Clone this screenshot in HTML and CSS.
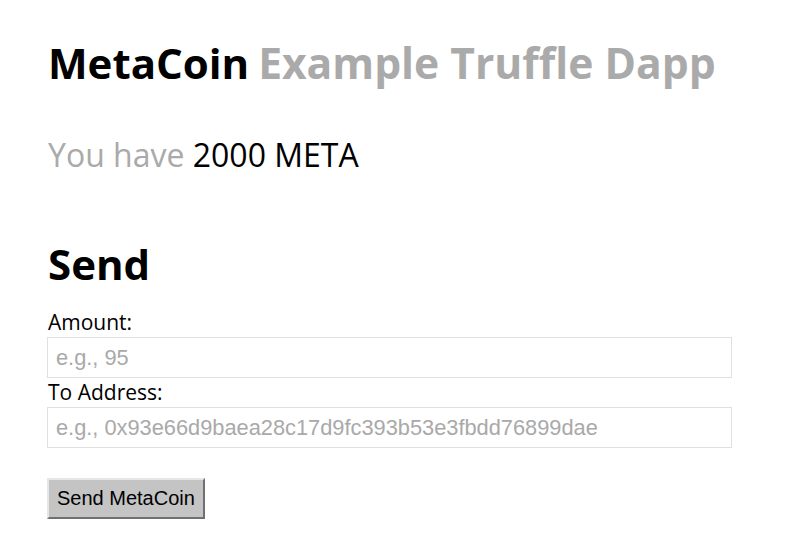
FILE: index.html
```html
<!DOCTYPE html>
<html>
<head>
<meta charset="utf-8">
<link rel="stylesheet" href="styles.css">
</head>
<body>
<main class="page">
  <h1 class="title">MetaCoin <span class="muted">Example Truffle Dapp</span></h1>
  <h2 class="balance"><span class="muted">You have</span> <span class="amount">2000</span> META</h2>
  <h1 class="send-title">Send</h1>
  <form class="send-form">
    <label class="field-label" for="amount">Amount:</label>
    <input class="field" type="text" id="amount" placeholder="e.g., 95">
    <label class="field-label" for="receiver">To Address:</label>
    <input class="field" type="text" id="receiver" placeholder="e.g., 0x93e66d9baea28c17d9fc393b53e3fbdd76899dae">
    <button class="send-button" type="button">Send MetaCoin</button>
  </form>
</main>
</body>
</html>
```
FILE: styles.css
```css
html, body {
  margin: 0;
  padding: 0;
  background: #fff;
}
body {
  font-family: "Open Sans", "Liberation Sans", sans-serif;
  color: #000;
}
.page {
  padding: 34px 48px 0;
  display: flex;
  flex-direction: column;
}
.muted {
  color: #aaa;
}
.title {
  font-size: 42px;
  font-weight: 700;
  margin: 0;
  line-height: 57px;
  word-spacing: -2px;
}
.title .muted {
  font-size: 42.6px;
  word-spacing: normal;
}
.balance {
  font-size: 32px;
  font-weight: 400;
  margin: 42px 0 0;
  line-height: 44px;
}
.send-title {
  font-size: 42px;
  font-weight: 700;
  margin: 58px 0 0;
  line-height: 57px;
}
.send-form {
  display: flex;
  flex-direction: column;
  align-items: flex-start;
  margin-top: 16px;
}
.field-label {
  font-size: 21px;
  line-height: 29px;
}
.field {
  box-sizing: border-box;
  width: 685px;
  height: 41px;
  margin: 0 0 0 -1px;
  border: 1px solid #e0e0e0;
  padding: 0 8px;
  font-family: "Liberation Sans", Arial, sans-serif;
  font-size: 21.8px;
  color: #000;
  background: #fff;
  outline: none;
}
.field::placeholder {
  color: #a9a9a9;
}
.send-button {
  margin: 30px 0 0 -1px;
  height: 41px;
  padding: 0 8px;
  font-family: "Liberation Sans", Arial, sans-serif;
  font-size: 20px;
  color: #000;
  background: #c4c4c4;
  border: 2px solid #e6e6e6;
  border-right-color: #707070;
  border-bottom-color: #707070;
}
```
